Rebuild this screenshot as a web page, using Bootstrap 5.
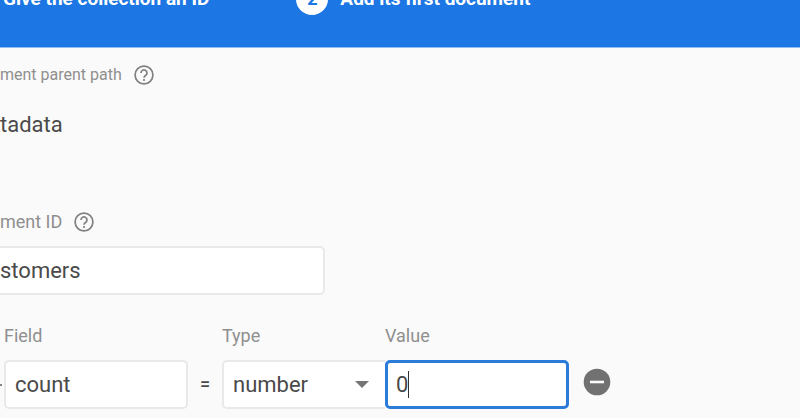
<!DOCTYPE html>
<html lang="en">
<head>
<meta charset="utf-8">
<meta name="viewport" content="width=device-width, initial-scale=1">
<title>Add its first document</title>
<link href="https://cdn.jsdelivr.net/npm/bootstrap@5.3.0/dist/css/bootstrap.min.css" rel="stylesheet">
<style>
body { font-family: Roboto, "Noto Sans", sans-serif; background: #fafafa; color: #4a4a4a; overflow: hidden; }
.stepper { background: #1c76e4; padding-bottom: 32px; border-bottom: 1px solid #8fbdf2; font-size: 19px; line-height: 32px; font-weight: 700; overflow: hidden; }
.steps { margin-top: -17px; padding-left: 3px; gap: 87px; }
.step-num { width: 32px; height: 32px; font-size: 18px; color: #1c76e4; }
.caption { font-size: 18px; line-height: 24px; color: #8f8f8f; gap: 10px; }
.path-block { padding-top: 15px; }
.caption-path { font-size: 16px; }
.help { color: #808080; line-height: 0; }
.path { font-size: 22px; line-height: 32px; padding-top: 22px; padding-bottom: 69px; }
.form-control.entry, .form-select.entry { height: 49px; font-size: 22px; line-height: 30px; color: #4a4a4a; background-color: #fff; border: 2px solid #e9e9e9; border-radius: 5px; padding: 8px 9px; }
.form-control.doc-id { max-width: 325px; border-left: 0; border-radius: 0 5px 5px 0; padding-left: 0; }
.form-control.entry.current { border: 3px solid #2b7bd9; box-shadow: none; padding: 7px 8px; }
.form-select.entry { background-image: none; border-right: 0; border-radius: 5px 0 0 5px; }
.fields { padding-top: 29px; }
.lead-dash { width: 4px; height: 49px; }
.lead-dash::before { content: ""; width: 2px; height: 2px; background: #858585; }
.w-entry { flex: 0 1 184px; }
.w-type { flex: 0 1 163px; }
.w-equals { flex: 0 0 34px; font-size: 18px; font-weight: 500; line-height: 50px; }
.entry-gap { margin-top: 12px; }
.form-control.doc-id.entry-gap { padding-left: 0; }
.arrow { right: 16px; top: 21px; }
.caret { left: 23px; top: 11px; width: 1px; height: 27px; background: #333; }
.remove { margin-bottom: 13px; margin-left: 14px; line-height: 0; color: #717171; }
</style>
</head>
<body>
<header class="stepper text-white">
  <div class="steps d-flex align-items-center text-nowrap">
    <span>Give the collection an ID</span>
    <span class="d-flex align-items-center gap-2">
      <span class="step-num rounded-circle bg-white text-center flex-shrink-0">2</span>
      <span class="ps-1">Add its first document</span>
    </span>
  </div>
</header>
<main>
  <section class="path-block">
    <div class="caption d-flex align-items-center">
      <span class="caption-path">ment parent path</span>
      <button type="button" class="help btn p-0 border-0" aria-label="Help on parent path">
        <svg width="24" height="24" viewBox="0 0 24 24" fill="none" stroke="currentColor" stroke-width="1.7"><circle cx="12" cy="12" r="8.9"/><path d="M9 10a3 3 0 1 1 4.8 2.3c-1.2.8-1.8 1.3-1.8 2.5"/><path d="M12 16v1.9"/></svg>
      </button>
    </div>
    <div class="path">tadata</div>
  </section>
  <section>
    <div class="caption d-flex align-items-center">
      <label for="doc-id">ment ID</label>
      <button type="button" class="help btn p-0 border-0" aria-label="Help on ID">
        <svg width="24" height="24" viewBox="0 0 24 24" fill="none" stroke="currentColor" stroke-width="1.7"><circle cx="12" cy="12" r="8.9"/><path d="M9 10a3 3 0 1 1 4.8 2.3c-1.2.8-1.8 1.3-1.8 2.5"/><path d="M12 16v1.9"/></svg>
      </button>
    </div>
    <input id="doc-id" class="form-control entry doc-id entry-gap" type="text" value="stomers">
  </section>
  <section class="fields d-flex align-items-end">
    <div class="lead-dash d-flex align-items-center"></div>
    <div class="w-entry">
      <label class="caption d-block" for="field">Field</label>
      <input id="field" class="form-control entry entry-gap" type="text" value="count">
    </div>
    <div class="w-equals text-center">=</div>
    <div class="w-type">
      <label class="caption d-block" for="type">Type</label>
      <div class="position-relative entry-gap">
        <select id="type" class="form-select entry"><option>number</option></select>
        <svg class="arrow position-absolute pe-none" width="14" height="7" viewBox="0 0 14 7"><path d="M0 0h14L7 7z" fill="#757575"/></svg>
      </div>
    </div>
    <div class="w-entry">
      <label class="caption d-block" for="value">Value</label>
      <div class="position-relative entry-gap">
        <input id="value" class="form-control entry current" type="text" value="0">
        <span class="caret position-absolute"></span>
      </div>
    </div>
    <button type="button" class="remove btn p-0 border-0" aria-label="Remove field">
      <svg width="28" height="28" viewBox="0 0 28 28"><circle cx="14" cy="14" r="13.3" fill="currentColor"/><path d="M7 14h14" stroke="#fafafa" stroke-width="2.6"/></svg>
    </button>
  </section>
</main>
<script src="https://cdn.jsdelivr.net/npm/bootstrap@5.3.0/dist/js/bootstrap.bundle.min.js"></script>
</body>
</html>
